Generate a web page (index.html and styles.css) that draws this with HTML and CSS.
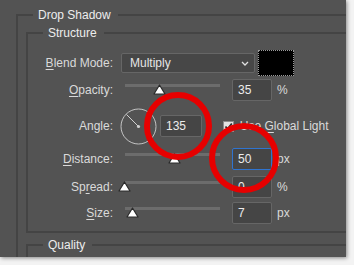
FILE: index.html
```html
<!DOCTYPE html>
<html>
<head>
<meta charset="utf-8">
<link rel="stylesheet" href="styles.css">
</head>
<body>
<div class="dialog">
  <fieldset class="group outer">
    <legend class="title">Drop Shadow</legend>
    <fieldset class="group structure">
      <legend class="title">Structure</legend>

      <div class="row blend-row">
        <span class="label"><u>B</u>lend Mode:</span>
        <div class="select">
          <span>Multiply</span>
          <svg class="chev" width="8" height="5" viewBox="0 0 8 5"><polyline points="1,1 4,4 7,1" fill="none" stroke="#e0e0e0" stroke-width="1.3"/></svg>
        </div>
        <div class="swatch"></div>
      </div>

      <div class="row slider-row r-opacity">
        <span class="label"><u>O</u>pacity:</span>
        <div class="slider"><div class="track"></div><svg class="thumb" style="left:27.5px" width="13" height="11" viewBox="0 0 13 11"><path d="M6.5 1 L12 10 H1 Z" fill="#fff" stroke="#2a2a2a" stroke-width="1.2" stroke-linejoin="round"/></svg></div>
        <div class="field">35</div>
        <span class="unit">%</span>
      </div>

      <div class="row angle-row">
        <span class="label">Angle:</span>
        <svg class="dial" width="37" height="37" viewBox="0 0 37 37">
          <circle cx="18.5" cy="18.5" r="17.5" fill="none" stroke="#c4c4c4" stroke-width="1"/>
          <line x1="6.5" y1="6.5" x2="18.5" y2="18.5" stroke="#d0d0d0" stroke-width="1"/>
          <circle cx="18.5" cy="18.5" r="1.6" fill="#d0d0d0"/>
        </svg>
        <div class="field wide">135</div>
        <span class="deg">°</span>
        <span class="check"><svg width="9" height="9" viewBox="0 0 9 9"><polyline points="1.5,4.5 3.6,7 7.8,1.5" fill="none" stroke="#2a2a2a" stroke-width="1.8"/></svg></span>
        <span class="check-label">Use <u>G</u>lobal Light</span>
      </div>

      <div class="row slider-row r-distance">
        <span class="label"><u>D</u>istance:</span>
        <div class="slider"><div class="track"></div><svg class="thumb" style="left:42.5px" width="13" height="11" viewBox="0 0 13 11"><path d="M6.5 1 L12 10 H1 Z" fill="#fff" stroke="#2a2a2a" stroke-width="1.2" stroke-linejoin="round"/></svg></div>
        <div class="field focus">50</div>
        <span class="unit">px</span>
      </div>

      <div class="row slider-row r-spread">
        <span class="label">Sp<u>r</u>ead:</span>
        <div class="slider"><div class="track"></div><svg class="thumb" style="left:-7px" width="13" height="11" viewBox="0 0 13 11"><path d="M6.5 1 L12 10 H1 Z" fill="#fff" stroke="#2a2a2a" stroke-width="1.2" stroke-linejoin="round"/></svg></div>
        <div class="field">0</div>
        <span class="unit">%</span>
      </div>

      <div class="row slider-row r-size">
        <span class="label"><u>S</u>ize:</span>
        <div class="slider"><div class="track"></div><svg class="thumb" style="left:0.5px" width="13" height="11" viewBox="0 0 13 11"><path d="M6.5 1 L12 10 H1 Z" fill="#fff" stroke="#2a2a2a" stroke-width="1.2" stroke-linejoin="round"/></svg></div>
        <div class="field">7</div>
        <span class="unit">px</span>
      </div>
    </fieldset>

    <fieldset class="group quality">
      <legend class="title">Quality</legend>
    </fieldset>
  </fieldset>

  <div class="mark mark-angle"></div>
  <div class="mark mark-distance"></div>
</div>
</body>
</html>
```
FILE: styles.css
```css
html, body {
  margin: 0;
  padding: 0;
}
body {
  background: #f3f3f3;
  width: 354px;
  height: 265px;
  overflow: hidden;
  font-family: "Liberation Sans", Arial, sans-serif;
  font-size: 12px;
  color: #dadada;
}
.dialog {
  position: relative;
  width: 346px;
  height: 257px;
  background: #535353;
  overflow: hidden;
  box-shadow: 1px 1px 4px rgba(0, 0, 0, 0.45);
}
.group {
  border: 2px solid #444444;
  margin: 0;
  padding: 0;
  min-width: 0;
  box-sizing: border-box;
}
.title {
  line-height: 16px;
  padding: 0 7px 0 5px;
  color: #ededed;
}
.outer {
  margin: 7px 0 0 16px;
  width: 340px;
  height: 300px;
  padding-left: 8px;
}
.outer > .title {
  margin-left: 7px;
}
.structure {
  margin-top: 2px;
  padding-bottom: 7px;
}
.structure > .title,
.quality > .title {
  margin-left: 15px;
}
.quality {
  margin-top: 4px;
  height: 40px;
}
.row {
  display: flex;
  align-items: center;
}
.label {
  width: 85px;
  flex: none;
  text-align: right;
  white-space: nowrap;
}
u {
  text-decoration-thickness: 1px;
  text-underline-offset: 2px;
}
.blend-row {
  height: 26px;
  margin-top: 9px;
}
.select {
  margin-left: 8px;
  width: 134px;
  height: 20px;
  box-sizing: border-box;
  background: #474747;
  border: 1px solid #666666;
  border-radius: 2px;
  display: flex;
  align-items: center;
  justify-content: space-between;
  padding: 0 5px 0 8px;
  color: #e6e6e6;
}
.chev {
  display: block;
}
.swatch {
  margin-left: 3px;
  width: 36px;
  height: 26px;
  box-sizing: border-box;
  background: #000;
  border: 1px dotted #9a9a9a;
}
.slider-row {
  height: 22px;
}
.r-opacity { margin-top: 3px; }
.r-distance { margin-top: 3px; }
.r-spread { margin-top: 6px; }
.r-size { margin-top: 4px; }
.slider {
  position: relative;
  margin-left: 12px;
  width: 95px;
  height: 12px;
  flex: none;
}
.track {
  height: 3px;
  background: #6c6c6c;
}
.thumb {
  position: absolute;
  top: 0;
}
.field {
  margin-left: 12px;
  width: 40px;
  height: 22px;
  box-sizing: border-box;
  background: #454545;
  border: 1px solid #666666;
  border-radius: 2px;
  padding-left: 5px;
  line-height: 20px;
  color: #ececec;
  flex: none;
}
.field.focus {
  border-color: #2f74d0;
}
.field.wide {
  margin-left: 3px;
  width: 42px;
}
.unit {
  margin-left: 5px;
}
.angle-row {
  height: 38px;
  margin-top: 6px;
}
.dial {
  margin-left: 7px;
  flex: none;
  display: block;
}
.deg {
  margin-left: 3px;
  align-self: flex-start;
  margin-top: 6px;
}
.check {
  margin-left: 13px;
  width: 11px;
  height: 11px;
  box-sizing: border-box;
  background: #e2e2e2;
  border: 1px solid #8c8c8c;
  display: flex;
  align-items: center;
  justify-content: center;
}
.check svg {
  display: block;
}
.check-label {
  margin-left: 6px;
  white-space: nowrap;
}
.mark {
  position: absolute;
  box-sizing: border-box;
  border: 6px solid #e60000;
  border-radius: 50%;
}
.mark-angle {
  left: 144px;
  top: 92px;
  width: 68px;
  height: 68px;
}
.mark-distance {
  left: 209px;
  top: 123px;
  width: 70px;
  height: 70px;
}
```
